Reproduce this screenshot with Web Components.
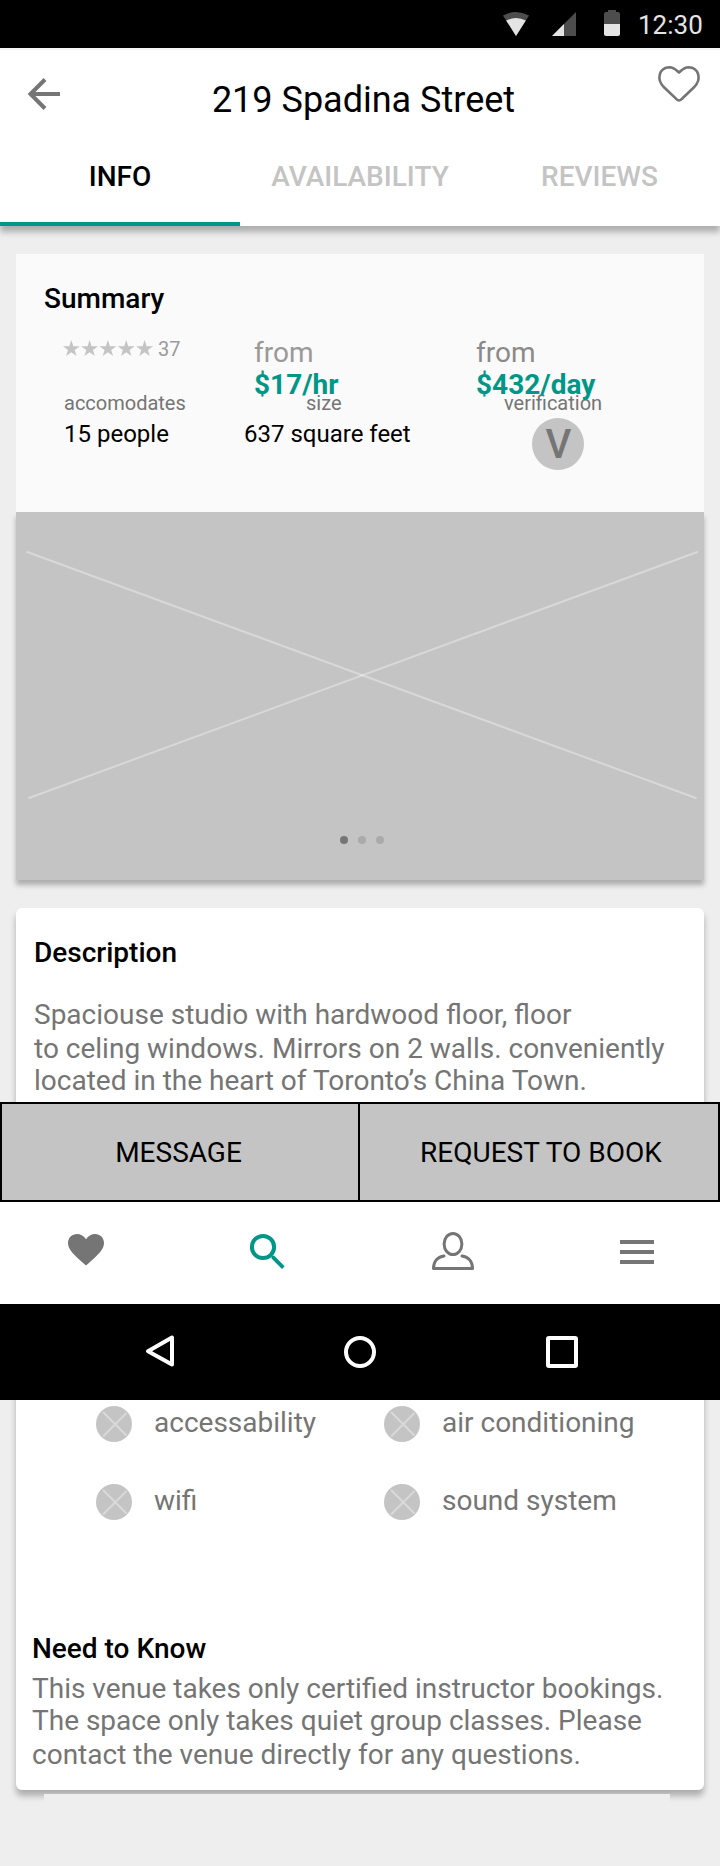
<!DOCTYPE html>
<html lang="en">
<head>
<meta charset="utf-8">
<title>219 Spadina Street</title>
<style>
html,body{margin:0}
body{width:720px;height:1866px;background:#eee;font-family:Roboto,"Liberation Sans",sans-serif;overflow:hidden}
</style>
</head>
<body>
<venue-page></venue-page>
<script>
function define(name, html){
  const t=document.createElement('template');
  t.innerHTML=html;
  customElements.define(name,class extends HTMLElement{
    constructor(){super();this.attachShadow({mode:'open'}).append(t.content.cloneNode(true));}
  });
}

define('status-bar',`
<style>
:host{display:flex;justify-content:flex-end;height:48px;background:#000;box-sizing:border-box;padding-right:18px}
svg{display:block;width:130px;height:48px}
span{width:64px;font-size:26px;line-height:50px;color:#e4e4e4;margin-left:8px;white-space:nowrap}
</style>
<svg viewBox="500 0 130 48">
<path d="M503 15.500Q516 8.500 529 15.500L516 36Z" fill="#4d4d4d"/>
<path d="M506.200 20.500Q516 15.500 525.800 20.500L516 36Z" fill="#e4e4e4"/>
<path d="M576 12V36H552Z" fill="#4d4d4d"/>
<path d="M564 24V36H552Z" fill="#e4e4e4"/>
<path d="M604 24V14Q604 12 606 12H608V10H616V12H618Q620 12 620 14V24Z" fill="#4d4d4d"/>
<path d="M604 24H620V34Q620 36 618 36H606Q604 36 604 34Z" fill="#e4e4e4"/>
</svg>
<span>12:30</span>`);

define('app-header',`
<style>
:host{display:block;height:178px;box-sizing:border-box;border-top:2px solid #f5f5f5;background:#fff;box-shadow:0 6px 6px rgba(0,0,0,.27)}
.bar{display:grid;grid-template-columns:200px 1fr 200px;height:86px}
.bar svg{display:block;width:100px;height:86px}
.bar svg:last-child{justify-self:end}
h1{margin:0;font-size:36px;font-weight:400;line-height:42px;padding:29px 0 0 7px;text-align:center;white-space:nowrap}
nav{display:grid;grid-template-columns:repeat(3,1fr);height:90px}
.last{padding-right:1px}
</style>
<div class="bar">
<svg viewBox="0 50 100 86"><path d="M60 94H31M45 79.500L30.500 94L45 108.500" fill="none" stroke="#757575" stroke-width="4"/></svg>
<h1>219 Spadina Street</h1>
<svg viewBox="620 50 100 86"><path d="M679 100.500C677.500 100.500 677 99.700 676 98.700L664 87.200C656 79.500 659 67.500 669.500 67.200C674 67.200 676.500 70.500 679 72.600C681.500 70.500 684 67.200 688.500 67.200C699 67.500 702 79.500 694 87.200L682 98.700C681 99.700 680.500 100.500 679 100.500Z" fill="none" stroke="#757575" stroke-width="2.600" stroke-linejoin="round"/></svg>
</div>
<nav><tab-item class="on">INFO</tab-item><tab-item>AVAILABILITY</tab-item><tab-item class="last">REVIEWS</tab-item></nav>`);

define('tab-item',`
<style>
:host{display:block;box-sizing:border-box;height:90px;text-align:center;font-size:28px;font-weight:500;line-height:33px;padding-top:24px;color:#c4c4c4}
:host(.on){color:#000;border-bottom:4px solid #009688}
</style><slot></slot>`);

define('star-rating',`
<style>
:host{display:flex;font-size:20px;line-height:24px;color:#9a9a9a}
svg{display:block;width:95px;height:24px}
</style>
<svg viewBox="0 0 95 24"><defs><path id="s" d="M8 3L10 9.200H16.500L11.300 13L13.200 19L8 15.300L2.800 19L4.700 13L-.5 9.200H6Z"/></defs>
<g fill="#c4c4c4"><use href="#s" x=".3"/><use href="#s" x="18.600"/><use href="#s" x="36.900"/><use href="#s" x="55.200"/><use href="#s" x="73.600"/></g></svg>
<slot></slot>`);

define('price-tag',`
<style>
:host{display:block;font-size:28px;line-height:32px;color:#999}
:host(.day){color:#8a8a8a}
b{display:block;color:#009688;font-weight:700}
</style>
from<b><slot></slot></b>`);

define('verified-badge',`
<style>
:host{display:block;box-sizing:border-box;width:52px;height:52px;padding:1px 0 0 1px;text-align:center;border-radius:50%;background:#c4c4c4;color:#757575;font-size:40px;font-weight:500;line-height:52px}
</style><slot></slot>`);

define('summary-card',`
<style>
:host{display:block;height:258px;background:#fafafa;box-sizing:border-box;padding:28px 28px 0}
h2{margin:0;font-size:28px;font-weight:500;line-height:34px}
.prices{display:grid;grid-template-columns:191px 222px 1fr;height:64px;padding:21px 0 0 19px;position:relative}
.facts{display:grid;grid-template-columns:180px 222px 1fr;padding-left:20px;margin-top:-10px}
verified-badge{margin:3px 0 0 66px}
.l{font-size:20px;line-height:24px;color:#757575;white-space:nowrap}
.v{font-size:24px;line-height:30px;padding-top:4px;white-space:nowrap}
.size{padding-left:62px}
.ver{padding-left:38px}
</style>
<h2>Summary</h2>
<div class="prices"><star-rating>37</star-rating><price-tag>$17/hr</price-tag><price-tag class="day">$432/day</price-tag></div>
<div class="facts">
<div><div class="l">accomodates</div><div class="v">15 people</div></div>
<div><div class="l size">size</div><div class="v">637 square feet</div></div>
<div><div class="l ver">verification</div><verified-badge>V</verified-badge></div>
</div>`);

define('photo-carousel',`
<style>
:host{display:block;height:368px;background:#c4c4c4;box-shadow:0 5px 5px rgba(0,0,0,.27)}
svg{display:block}
</style>
<svg width="688" height="368" viewBox="16 512 688 368"><g stroke="#fff" stroke-opacity=".35" stroke-width="2"><path d="M26.500 551.700L696.500 798.300"/><path d="M698 551.700L28.300 798.300"/></g>
<circle cx="344" cy="840" r="4" fill="#757575"/><circle cx="362" cy="840" r="4" fill="#aaa"/><circle cx="380" cy="840" r="4" fill="#aaa"/></svg>`);

define('amenity-item',`
<style>
:host{display:flex;align-items:flex-start;height:36px;font-size:28px;line-height:33px;color:#757575;white-space:nowrap}
svg{display:block;margin-right:22px}
</style>
<svg width="36" height="36" viewBox="0 0 36 36"><circle cx="18" cy="18" r="18" fill="#c4c4c4"/><path d="M7 6L30.500 29.500M30.500 7L7 30.500" stroke="#d9d9d9" stroke-width="2"/></svg>
<slot></slot>`);

define('details-card',`
<style>
:host{display:block;height:882px;box-sizing:border-box;background:#fff;border-radius:6px;box-shadow:0 6px 6px rgba(0,0,0,.27);padding:28px 16px 0}
h2{margin:0;font-size:28px;font-weight:500;line-height:34px}
p{margin:0;font-size:28px;line-height:33px;color:#757575;white-space:nowrap}
p span{display:block}
.d{padding:0 0 0 2px}
.d p{padding-top:28px}
.d span:nth-child(2),.k span:nth-child(3){padding-top:1px}
.d span:nth-child(3),.k span:nth-child(2){margin-top:-1px}
.grid{display:grid;grid-template-columns:288px 1fr;row-gap:42px;padding:309px 0 0 64px}
.k{padding-top:112px}
.k p{padding-top:6px}
</style>
<div class="d"><h2>Description</h2>
<p><span>Spaciouse studio with hardwood floor, floor</span><span>to celing windows. Mirrors on 2 walls. conveniently</span><span>located in the heart of Toronto’s China Town.</span></p></div>
<div class="grid"><amenity-item>accessability</amenity-item><amenity-item>air conditioning</amenity-item><amenity-item>wifi</amenity-item><amenity-item>sound system</amenity-item></div>
<div class="k"><h2>Need to Know</h2>
<p><span>This venue takes only certified instructor bookings.</span><span>The space only takes quiet group classes. Please</span><span>contact the venue directly for any questions.</span></p></div>`);

define('action-bar',`
<style>
:host{display:grid;grid-template-columns:358px 1fr;height:100px;box-sizing:border-box;border:2px solid #000;background:#c4c4c4;font-size:28px}
div{text-align:center;line-height:95px;padding-top:1px}
.message{border-right:2px solid #000;padding-right:3px}
.book{padding-left:4px}
</style>
<div class="message">MESSAGE</div><div class="book">REQUEST TO BOOK</div>`);

define('app-nav',`
<style>:host{display:block;height:102px;background:#fff}svg{display:block}</style>
<svg width="720" height="102" viewBox="0 1202 720 102">
<path d="M86 1265.600L83.400 1263.300C74 1254.800 68 1249.500 68 1243C68 1237.800 72 1234 77 1234C80.500 1234 84 1236 86 1239.200C88 1236 91.500 1234 95 1234C100 1234 104 1237.800 104 1243C104 1249.500 98 1254.800 88.600 1263.300Z" fill="#757575"/>
<circle cx="263" cy="1247" r="11.100" fill="none" stroke="#009688" stroke-width="4"/>
<path d="M271.800 1256L274 1255.500L284.700 1266.300L282 1269L271.300 1258.300Z" fill="#009688"/>
<g fill="none" stroke="#757575" stroke-width="3" stroke-linecap="round" stroke-linejoin="round"><ellipse cx="453" cy="1244" rx="8.900" ry="10.500"/><path d="M444 1256C437 1257 433.500 1262 433.500 1268.500H472.500C472.500 1262 469 1257 462 1256"/></g>
<path d="M620 1240H654V1244H620ZM620 1250H654V1254H620ZM620 1260H654V1264H620Z" fill="#757575"/>
</svg>`);

define('system-nav',`
<style>:host{display:block;height:96px;background:#000}svg{display:block}</style>
<svg width="720" height="96" viewBox="0 1304 720 96"><g fill="none" stroke="#fff" stroke-width="4" stroke-linejoin="round">
<path d="M172 1337.500V1364.500L148 1351.300Z"/><circle cx="360" cy="1352" r="14"/><rect x="548" y="1338" width="28" height="28" rx="1"/></g></svg>`);

define('venue-page',`
<style>
:host{display:block;position:relative;width:720px;height:1866px}
main{padding:28px 16px 0}
details-card{margin-top:28px}
.tail{height:72px;margin:4px 34px 0 28px;background:#eee}
footer{position:absolute;left:0;right:0;top:1102px}
</style>
<status-bar></status-bar><app-header></app-header>
<main><summary-card></summary-card><photo-carousel></photo-carousel><details-card></details-card><div class="tail"></div></main>
<footer><action-bar></action-bar><app-nav></app-nav><system-nav></system-nav></footer>`);
</script>
</body>
</html>
